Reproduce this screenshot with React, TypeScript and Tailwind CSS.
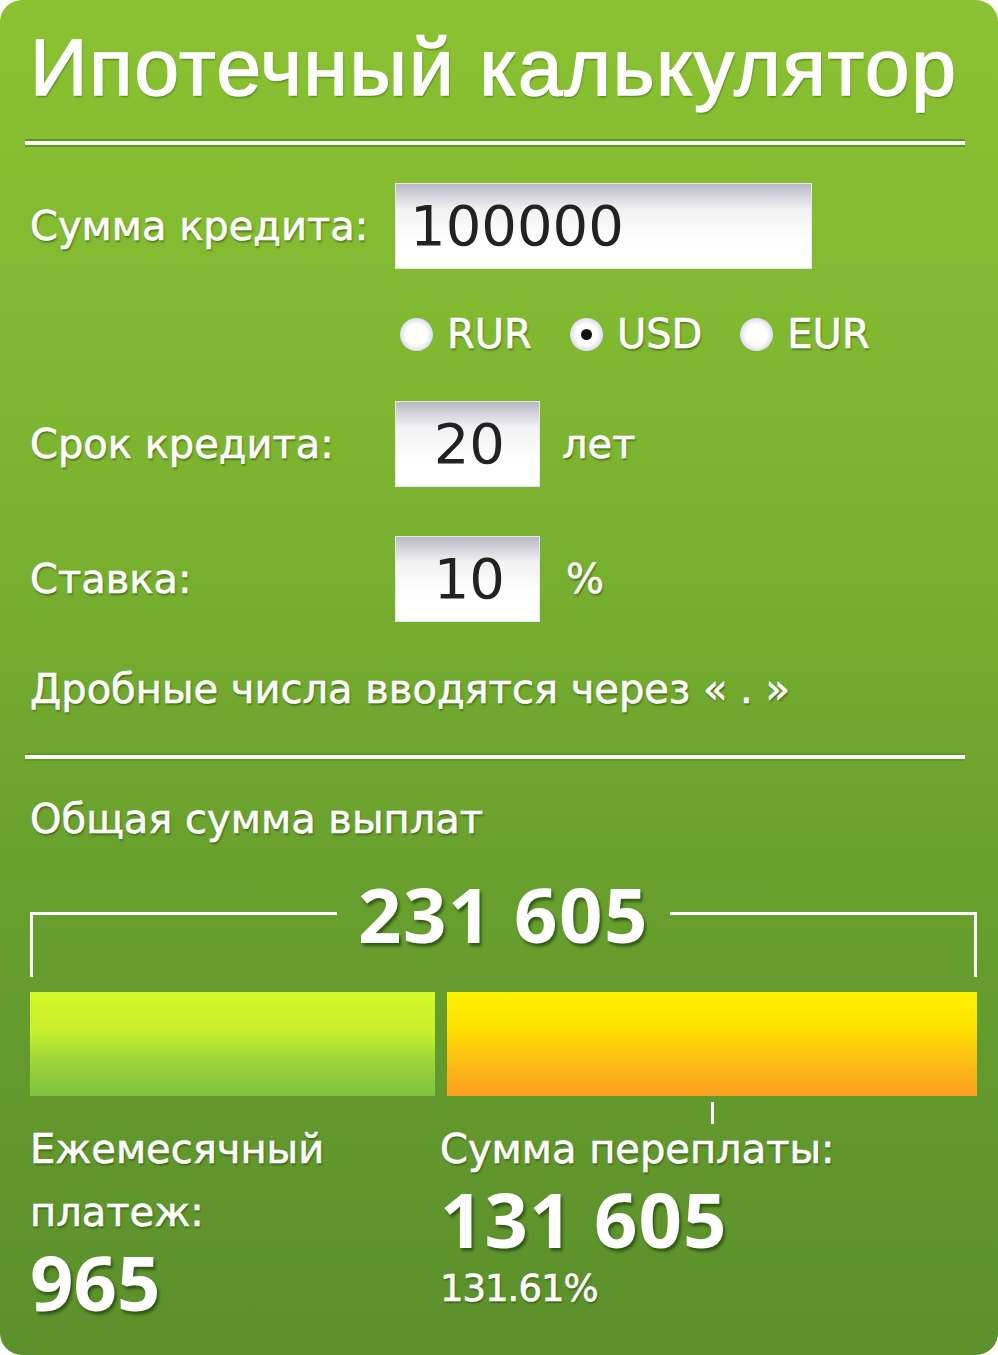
const shadow = "[text-shadow:1px_2px_2px_rgba(40,70,10,0.6)] [-webkit-text-stroke:0.6px_white]"
const bigShadow = "[text-shadow:2px_3px_3px_rgba(30,60,10,0.7)]"
const openSans = { fontFamily: '"Open Sans", "DejaVu Sans", sans-serif' }

const Divider = () => (
  <div className="ml-[-5px] mr-[12px] flex flex-col">
    <div className="h-[2px] bg-[#5c9a22]" />
    <div className="h-[4px] bg-white" />
    <div className="h-[2px] bg-[#5c9a22]" />
  </div>
)

const Field = ({ value, className }: { value: string; className: string }) => (
  <div
    className={`flex h-[86px] items-center border border-[#e8e8e8] bg-[linear-gradient(to_bottom,#b9b9c4_0%,#f2f2f4_30%,#ffffff_70%)] text-[56px] text-[#222] ${className}`}
  >
    {value}
  </div>
)

const Radio = ({ label, checked }: { label: string; checked?: boolean }) => (
  <div className="flex items-center gap-[14px]">
    <div className="flex h-[33px] w-[33px] items-center justify-center rounded-full bg-[radial-gradient(circle,#ffffff_45%,#d8d4ee_75%,#9c9ab8_100%)]">
      {checked && <div className="h-[11px] w-[11px] rounded-full bg-[#111]" />}
    </div>
    <span className={shadow}>{label}</span>
  </div>
)

export default function App() {
  return (
    <div className="min-h-[1355px] w-[998px] bg-white">
      <div
        className="h-[1355px] w-[998px] overflow-hidden rounded-[22px] bg-[linear-gradient(to_bottom,#8bc232_0%,#7cb430_35%,#68a02e_65%,#5b902b_100%)] pl-[30px] pr-[21px] pt-[18px] text-white"
        style={{ fontFamily: '"DejaVu Sans", Verdana, sans-serif' }}
      >
        <h1
          className="text-[80px] leading-[100px] tracking-[1.8px] [text-shadow:1px_2px_2px_rgba(40,70,10,0.5)] [-webkit-text-stroke:1.5px_white]"
          style={{ fontFamily: '"Liberation Sans", Arial, sans-serif' }}
        >
          Ипотечный калькулятор
        </h1>

        <div className="mt-[21px]">
          <Divider />
        </div>

        <div className="mt-[36px] flex items-center">
          <div className={`w-[365px] text-[40px] ${shadow}`}>Сумма кредита:</div>
          <Field value="100000" className="w-[417px] pl-[14px]" />
        </div>

        <div className="mt-[40px] ml-[370px] flex h-[50px] gap-[38px] text-[40px]">
          <Radio label="RUR" />
          <Radio label="USD" checked />
          <Radio label="EUR" />
        </div>

        <div className="mt-[42px] flex items-center">
          <div className={`w-[365px] text-[40px] ${shadow}`}>Срок кредита:</div>
          <Field value="20" className="w-[145px] justify-end pr-[34px]" />
          <span className={`ml-[22px] text-[40px] ${shadow}`}>лет</span>
        </div>

        <div className="mt-[49px] flex items-center">
          <div className={`w-[365px] text-[40px] ${shadow}`}>Ставка:</div>
          <Field value="10" className="w-[145px] justify-end pr-[34px]" />
          <span className={`ml-[26px] text-[40px] ${shadow}`}>%</span>
        </div>

        <div className={`mt-[42px] h-[50px] text-[40px] leading-[50px] ${shadow}`}>
          Дробные числа вводятся через « . »
        </div>

        <div className="mt-[39px]">
          <Divider />
        </div>

        <div className={`mt-[33px] h-[50px] text-[40px] leading-[50px] ${shadow}`}>Общая сумма выплат</div>

        <div className="mt-[32px] flex items-start">
          <div className="mt-[36px] h-[65px] flex-1 border-l-[3px] border-t-[3px] border-white" />
          <div
            className={`px-[21px] text-[76px] font-bold leading-[76px] tracking-[1.5px] ${bigShadow}`}
            style={openSans}
          >
            231 605
          </div>
          <div className="mt-[36px] h-[65px] flex-1 border-r-[3px] border-t-[3px] border-white" />
        </div>

        <div className="mt-[15px] flex h-[104px] gap-[12px]">
          <div className="w-[405px] bg-[linear-gradient(to_bottom,#d4f82a_0%,#c6ef2c_40%,#9ed63a_65%,#7fc240_100%)]" />
          <div className="flex-1 bg-[linear-gradient(to_bottom,#fff200_0%,#ffe000_35%,#fcc012_65%,#f9a020_100%)]" />
        </div>

        <div className="ml-[681px] mt-[6px] h-[22px] w-[3px] bg-white" />

        <div className="mt-[-6px] flex">
          <div className="w-[410px]">
            <div className={`text-[40px] leading-[63px] ${shadow}`}>
              Ежемесячный
              <br />
              платеж:
            </div>
            <div className={`text-[76px] font-bold leading-[76px] ${bigShadow}`} style={openSans}>
              965
            </div>
          </div>
          <div>
            <div className={`text-[40px] leading-[63px] ${shadow}`}>Сумма переплаты:</div>
            <div className={`text-[76px] font-bold leading-[76px] tracking-[1px] ${bigShadow}`} style={openSans}>
              131 605
            </div>
            <div className={`mt-[10px] text-[37px] leading-[44px] tracking-[-1px] ${shadow}`}>131.61%</div>
          </div>
        </div>
      </div>
    </div>
  )
}
